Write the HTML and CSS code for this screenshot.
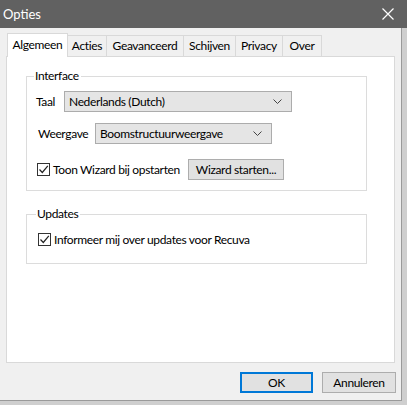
FILE: index.html
```html
<!DOCTYPE html>
<html lang="nl">
<head>
<meta charset="utf-8">
<title>Opties</title>
<link rel="stylesheet" href="styles.css">
</head>
<body>
<div class="window">
  <div class="titlebar">
    <span class="title">Opties</span>
    <svg class="close" width="12" height="12" viewBox="0 0 12 12"><path d="M0.5 0.5 L11.5 11.5 M11.5 0.5 L0.5 11.5" stroke="#fff" stroke-width="1.2" fill="none"/></svg>
  </div>
  <div class="content">
    <div class="tabs">
      <div class="tab active">Algemeen</div>
      <div class="tab t-acties">Acties</div>
      <div class="tab t-geav">Geavanceerd</div>
      <div class="tab t-schijven">Schijven</div>
      <div class="tab t-privacy">Privacy</div>
      <div class="tab t-over">Over</div>
    </div>
    <div class="panel">
      <fieldset class="group group-interface">
        <legend>Interface</legend>
        <div class="row row-taal">
          <span class="lbl lbl-taal">Taal</span>
          <div class="select sel-taal"><span>Nederlands (Dutch)</span><svg class="chev" width="9" height="5" viewBox="0 0 9 5"><path d="M0.5 0.5 L4.5 4.5 L8.5 0.5" stroke="#444" fill="none"/></svg></div>
        </div>
        <div class="row row-weergave">
          <span class="lbl lbl-weergave">Weergave</span>
          <div class="select sel-weergave"><span>Boomstructuurweergave</span><svg class="chev" width="9" height="5" viewBox="0 0 9 5"><path d="M0.5 0.5 L4.5 4.5 L8.5 0.5" stroke="#444" fill="none"/></svg></div>
        </div>
        <div class="row row-wizard">
          <label class="check check-wizard"><span class="box"><svg width="11" height="11" viewBox="0 0 11 11"><path d="M1.5 5.5 L4.3 8.5 L9.8 1.8" stroke="#222" stroke-width="1.2" fill="none"/></svg></span>Toon Wizard bij opstarten</label>
          <div class="btn btn-wizard">Wizard starten...</div>
        </div>
      </fieldset>
      <fieldset class="group group-updates">
        <legend>Updates</legend>
        <label class="check"><span class="box"><svg width="11" height="11" viewBox="0 0 11 11"><path d="M1.5 5.5 L4.3 8.5 L9.8 1.8" stroke="#222" stroke-width="1.2" fill="none"/></svg></span>Informeer mij over updates voor Recuva</label>
      </fieldset>
    </div>
    <div class="footer">
      <div class="btn btn-ok">OK</div>
      <div class="btn btn-cancel">Annuleren</div>
    </div>
  </div>
</div>
</body>
</html>
```
FILE: styles.css
```css
html, body {
  margin: 0;
  padding: 0;
  background: #cfcfcf;
}
body {
  width: 407px;
  height: 405px;
  font-family: "Lato", "Noto Sans", sans-serif;
  font-size: 12px;
  letter-spacing: -0.35px;
  white-space: nowrap;
  color: #000;
}
.window {
  width: 402px;
  height: 401px;
  background: #f0f0f0;
  border-right: 1px solid #9a9a9a;
  border-bottom: 1px solid #9a9a9a;
  box-sizing: border-box;
  display: flex;
  flex-direction: column;
}
.titlebar {
  height: 28px;
  background: #616161;
  color: #fff;
  display: flex;
  align-items: center;
  justify-content: space-between;
  padding: 0 9px 0 3px;
  font-size: 13px;
  letter-spacing: 0;
  width: 407px;
  box-sizing: border-box;
  flex: none;
  margin-right: -6px;
}
.close { margin-top: -1px; margin-right: 4px; }
.content {
  padding: 5px 6px 0 6px;
  display: flex;
  flex-direction: column;
}
.tabs {
  display: flex;
  align-items: flex-end;
  height: 23px;
  padding-left: 1px;
  position: relative;
  z-index: 2;
}
.tab {
  height: 21px;
  border: 1px solid #d9d9d9;
  border-bottom: none;
  border-left: none;
  background: #f0f0f0;
  box-sizing: border-box;
  display: flex;
  align-items: center;
  justify-content: center;
  line-height: 1;
}
.tab.active {
  height: 24px;
  width: 61px;
  background: #fff;
  border-left: 1px solid #d9d9d9;
  margin-bottom: -1px;
  padding-bottom: 2px;
}
.t-acties { width: 39px; }
.t-geav { width: 77px; }
.t-schijven { width: 52px; }
.t-privacy { width: 47px; }
.t-over { width: 39px; }
.panel {
  width: 389px;
  height: 307px;
  background: #fff;
  border: 1px solid #d9d9d9;
  box-sizing: border-box;
  padding: 11px 0 0 19px;
}
.group {
  margin: 0;
  width: 341px;
  box-sizing: border-box;
  border: 1px solid #dcdcdc;
  padding: 0 0 0 9px;
}
.group legend {
  padding: 0 2px 0 1px;
  margin-left: -2px;
  line-height: 16px;
  height: 16px;
}
.group-interface { height: 123px; padding-top: 7px; }
.group-updates { height: 58px; margin-top: 15px; padding-top: 10px; padding-left: 11px; }
.row {
  display: flex;
  align-items: center;
}
.row-taal { height: 21px; }
.row-weergave { height: 21px; margin-top: 11px; padding-left: 2px; }
.row-wizard { height: 21px; margin-top: 15px; padding-left: 1px; }
.lbl { flex: none; }
.lbl-taal { width: 28px; }
.lbl-weergave { width: 57px; }
.select {
  height: 21px;
  box-sizing: border-box;
  background: #e5e5e5;
  border: 1px solid #acacac;
  display: flex;
  align-items: center;
  justify-content: space-between;
  padding: 0 9px 0 4px;
}
.sel-taal { width: 228px; }
.sel-weergave { width: 177px; }
.check {
  display: flex;
  align-items: center;
}
.check-wizard { width: 151px; flex: none; }
.box {
  width: 13px;
  height: 13px;
  box-sizing: border-box;
  border: 1px solid #333;
  background: #fff;
  display: flex;
  align-items: center;
  justify-content: center;
  margin-right: 3px;
  flex: none;
}
.btn {
  box-sizing: border-box;
  background: #e1e1e1;
  border: 1px solid #adadad;
  display: flex;
  align-items: center;
  justify-content: center;
  height: 21px;
}
.btn-wizard { width: 96px; }
.footer {
  display: flex;
  justify-content: flex-end;
  gap: 9px;
  padding-top: 9px;
  padding-right: 0;
  width: 390px;
}
.btn-ok { width: 73px; border: 2px solid #0078d7; }
.btn-cancel { width: 74px; }
```
